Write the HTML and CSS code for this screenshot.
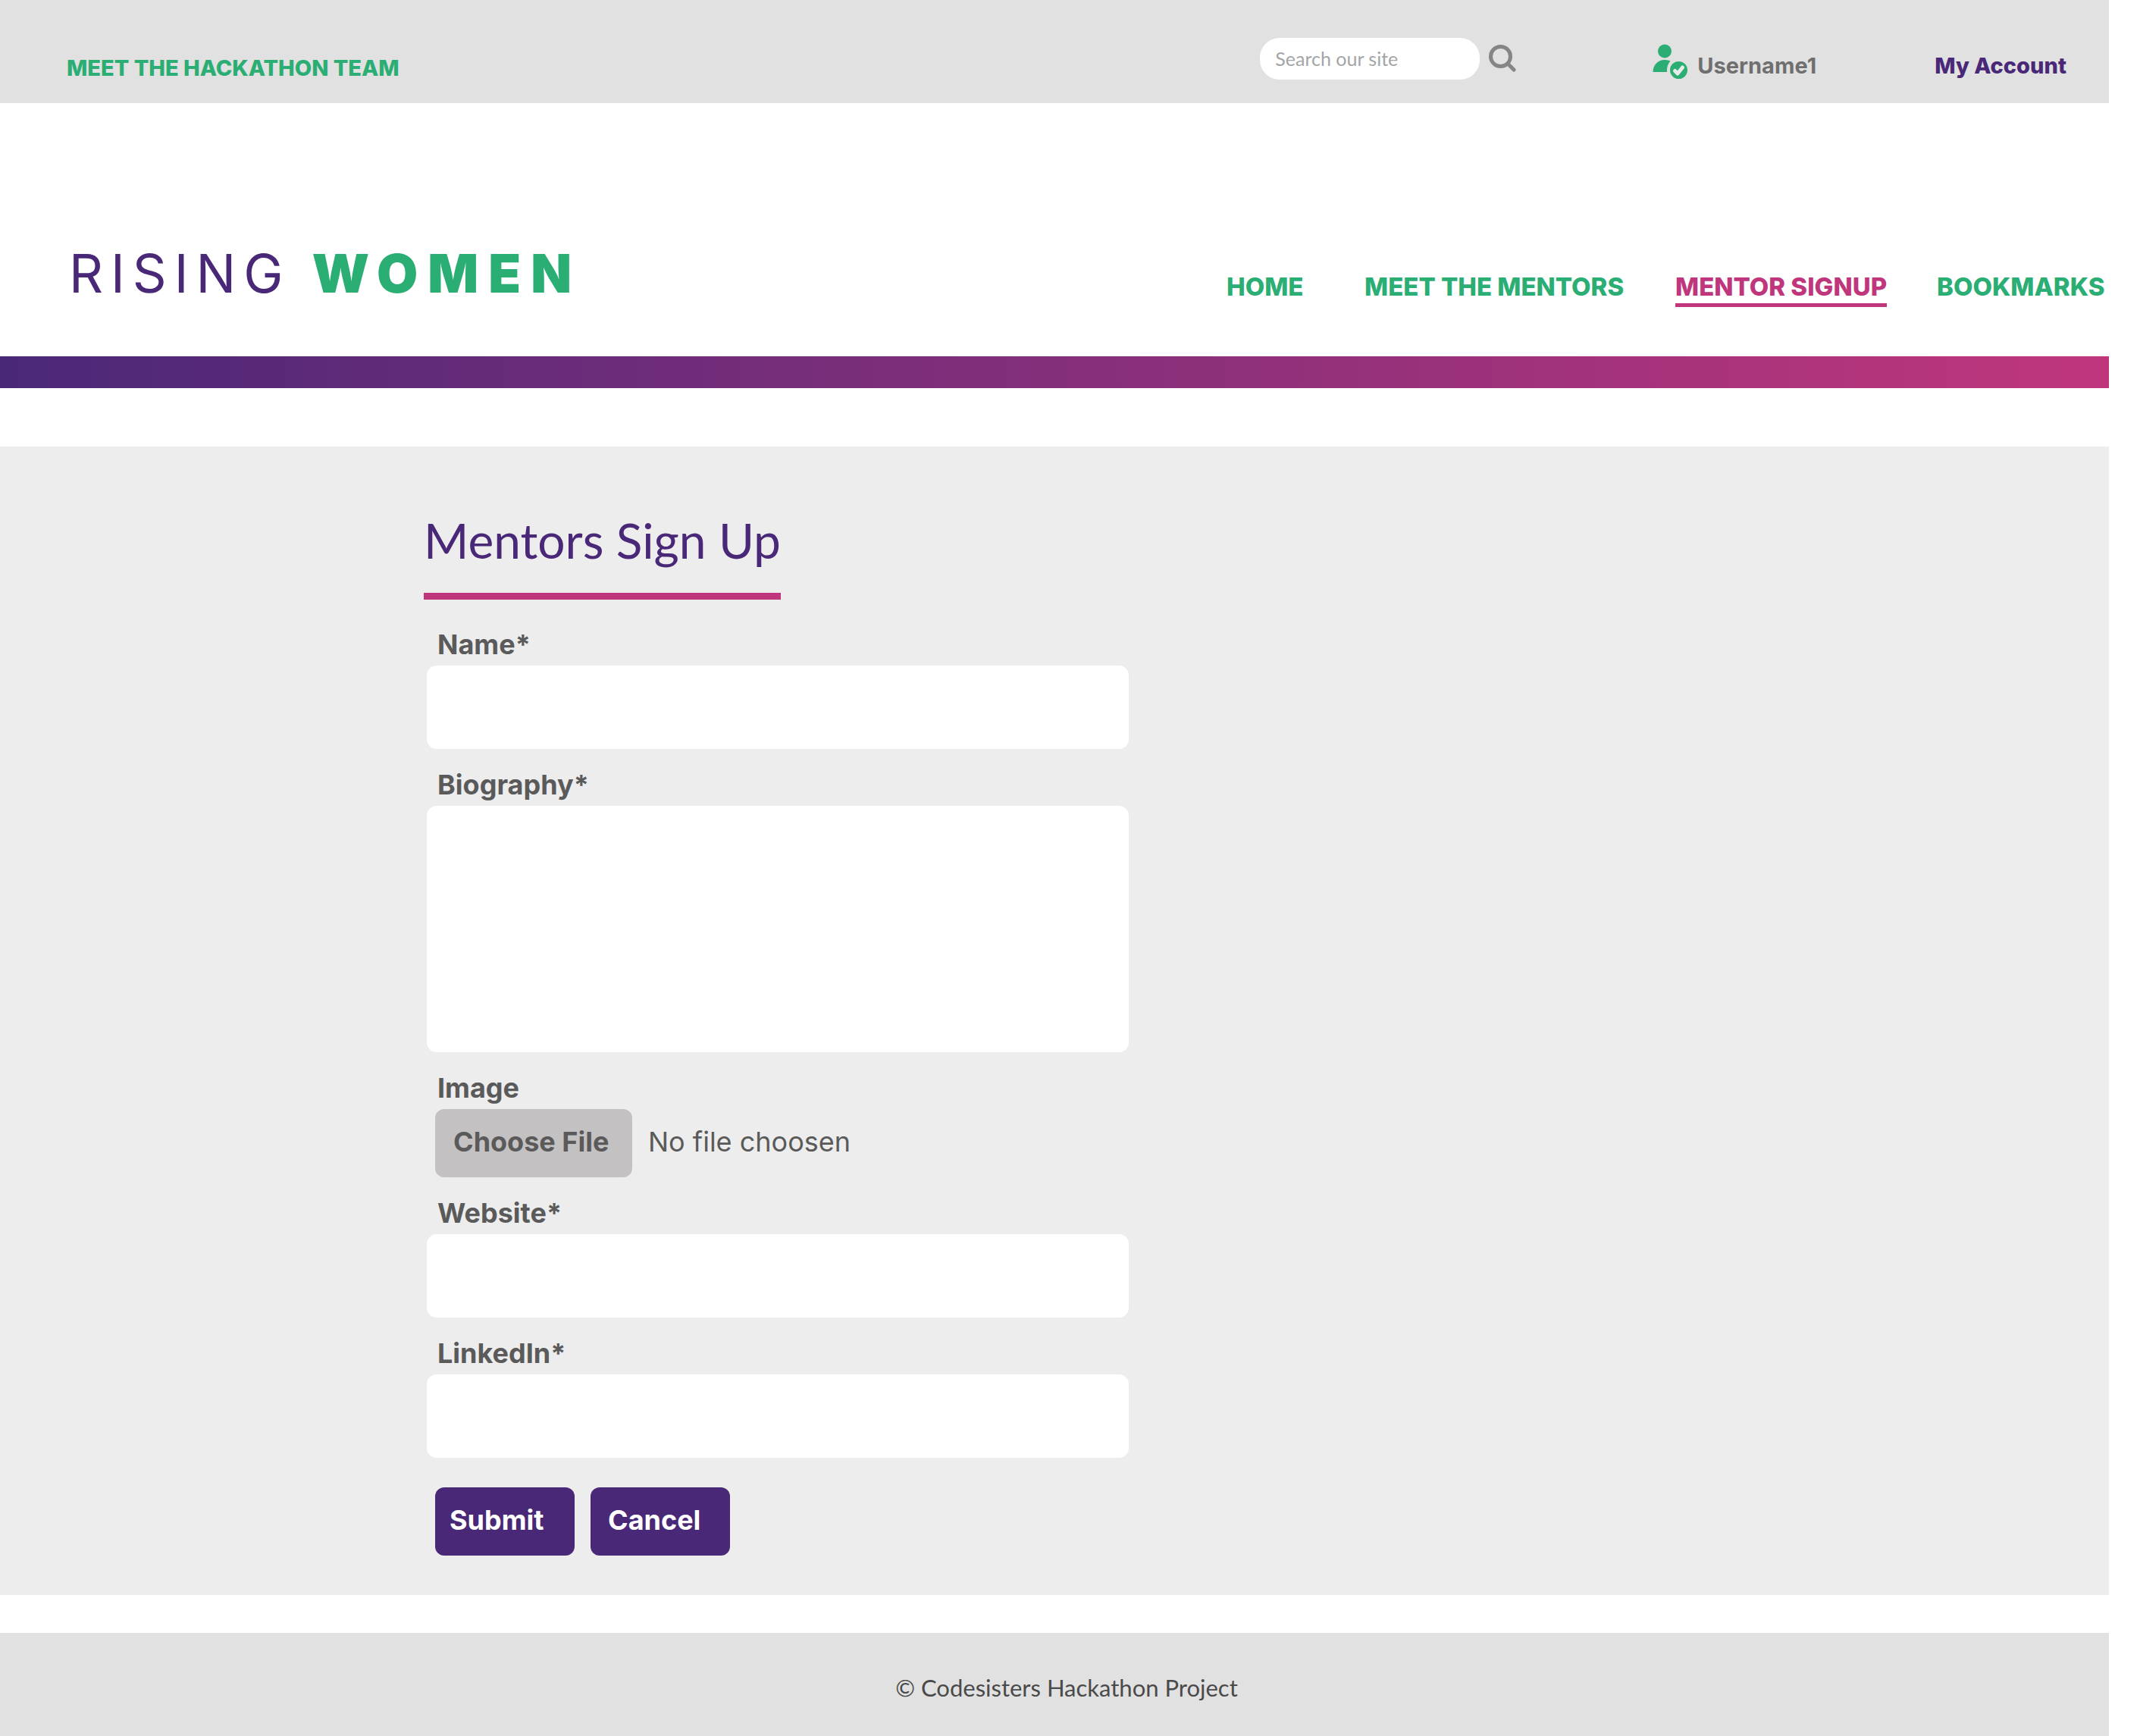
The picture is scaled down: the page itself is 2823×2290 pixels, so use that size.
FILE: index.html
```html
<!DOCTYPE html>
<html lang="en">
<head>
  <meta charset="utf-8">
  <meta name="viewport" content="width=device-width, initial-scale=1">
  <title>Mentors Sign Up | Rising Women</title>
  <link rel="stylesheet" href="styles.css">
</head>
<body>
  <div class="page">
    <div class="topbar">
      <a class="topbar-team" href="#team">MEET THE HACKATHON TEAM</a>
      <div class="topbar-tools">
        <form class="search" role="search">
          <input class="search-input" type="search" placeholder="Search our site" aria-label="Search our site">
          <button class="search-button" type="submit" aria-label="Search">
            <svg width="36" height="36" viewBox="0 0 36 36" fill="none" stroke="#858585" stroke-width="5" stroke-linecap="round" aria-hidden="true">
              <circle cx="15.5" cy="15.5" r="13"/>
              <path d="M25 25l8 8"/>
            </svg>
          </button>
        </form>
        <a class="user" href="#profile">
          <svg class="user-icon" width="46" height="46" viewBox="0 0 46 46" fill="#2bae74" aria-hidden="true">
            <circle cx="16" cy="9.5" r="9"/>
            <path d="M0.5 37C0.5 28 7 21 15.5 21C18.500 21 21 21.500 23.500 22.500C20 26.500 18.500 31 19 37Z"/>
            <circle cx="34.5" cy="34.5" r="11.5"/>
            <path d="M29.500 35.500l3.500 3.500l6.500-8" fill="none" stroke="#e8ebe9" stroke-width="5" stroke-linecap="round" stroke-linejoin="round"/>
          </svg>
          <span>Username1</span>
        </a>
        <a class="account" href="#account">My Account</a>
      </div>
    </div>

    <header class="header">
      <a class="logo" href="#home"><span class="logo-rising">RISING</span><span class="logo-women">WOMEN</span></a>
      <nav class="nav" aria-label="Main">
        <a class="nav-link" href="#home">HOME</a>
        <a class="nav-link" href="#mentors">MEET THE MENTORS</a>
        <a class="nav-link nav-link-current" href="#signup" aria-current="page">MENTOR SIGNUP</a>
        <a class="nav-link" href="#bookmarks">BOOKMARKS</a>
      </nav>
    </header>
    <div class="stripe"></div>

    <main class="main">
      <h1 class="title">Mentors Sign Up</h1>
      <form class="form">
        <div class="field">
          <label class="label" for="name">Name*</label>
          <input class="input" id="name" type="text" required>
        </div>
        <div class="field">
          <label class="label" for="biography">Biography*</label>
          <textarea class="input input-tall" id="biography" required></textarea>
        </div>
        <div class="field">
          <label class="label" for="image">Image</label>
          <div class="file">
            <input id="image" type="file" accept="image/*" hidden>
            <button class="button button-file" type="button" onclick="document.getElementById('image').click()">Choose File</button>
            <span class="file-status">No file choosen</span>
          </div>
        </div>
        <div class="field">
          <label class="label" for="website">Website*</label>
          <input class="input" id="website" type="url" required>
        </div>
        <div class="field">
          <label class="label" for="linkedin">LinkedIn*</label>
          <input class="input" id="linkedin" type="url" required>
        </div>
        <div class="actions">
          <button class="button button-submit" type="submit">Submit</button>
          <button class="button button-cancel" type="reset">Cancel</button>
        </div>
      </form>
    </main>

    <footer class="footer">© Codesisters Hackathon Project</footer>
  </div>
</body>
</html>
```
FILE: styles.css
```css
:root {
  --purple: #4a2878;
  --pink: #bf367c;
  --green: #2bae74;
  --bar: #e1e1e1;
  --panel: #ededed;
  --text: #5a5a5a;
}

* {
  box-sizing: border-box;
}

body {
  margin: 0;
  background: #fff;
  color: var(--text);
  font-family: Inter, "Liberation Sans", sans-serif;
}

a {
  color: inherit;
  text-decoration: none;
}

button,
input,
textarea {
  margin: 0;
  border: 0;
  font: inherit;
}

.page {
  margin-right: 41px;
}

/* Top bar */

.topbar {
  display: flex;
  flex-wrap: wrap;
  justify-content: space-between;
  align-items: center;
  min-height: 136px;
  padding: 38px 56px 0 88px;
  background: var(--bar);
  font-size: 29px;
  line-height: 34px;
  font-weight: 800;
}

.topbar-team {
  margin-top: 6px;
  color: var(--green);
}

.topbar-tools {
  display: flex;
  align-items: center;
}

.search {
  display: flex;
  align-items: center;
  gap: 12px;
  margin: 0 180px 20px 0;
}

.search-input {
  width: 290px;
  height: 55px;
  padding: 0 20px;
  border-radius: 26px;
  background: #fff;
  color: var(--text);
  font-family: Lato, "Liberation Sans", sans-serif;
  font-size: 25px;
  font-weight: 400;
}

.search-input::placeholder {
  color: #a3a5a7;
  opacity: 1;
}

.search-button {
  display: flex;
  padding: 0;
  background: none;
}

.user {
  display: flex;
  align-items: center;
  gap: 13px;
  margin-right: 156px;
  color: #6f6f6f;
  font-weight: 700;
}

.user-icon {
  margin-bottom: 12px;
}

.account {
  color: var(--purple);
}

/* Header */

.header {
  display: flex;
  flex-wrap: wrap;
  justify-content: space-between;
  align-items: flex-end;
  padding: 188px 3px 65px 91px;
}

.logo {
  display: flex;
  gap: 28px;
  margin-bottom: 9px;
  font-size: 70px;
  line-height: 70px;
}

.logo-rising {
  color: var(--purple);
  font-weight: 400;
  letter-spacing: 10px;
}

.logo-women {
  color: var(--green);
  font-weight: 900;
  letter-spacing: 13px;
}

.nav {
  display: grid;
  grid-template-columns: 182px 410px 345px 224px;
  justify-items: start;
  min-height: 81px;
  align-items: end;
}

.nav-link {
  padding-bottom: 2px;
  border-bottom: 5px solid transparent;
  color: var(--green);
  font-size: 33px;
  line-height: 40px;
  font-weight: 800;
}

.nav-link-current {
  border-color: var(--pink);
  color: var(--pink);
}

.stripe {
  height: 42px;
  background: linear-gradient(to right, var(--purple), var(--pink));
}

/* Sign-up form */

.main {
  margin: 77px 0 50px;
  padding: 90px 20px 52px 559px;
  background: var(--panel);
}

.title {
  width: fit-content;
  margin: 0 0 37px;
  padding-bottom: 35px;
  border-bottom: 9px solid var(--pink);
  color: var(--purple);
  font-family: Lato, "Liberation Sans", sans-serif;
  font-size: 64px;
  line-height: 68px;
  font-weight: 400;
}

.form {
  display: flex;
  flex-direction: column;
  gap: 25px;
  max-width: 930px;
  padding-left: 4px;
  font-size: 36px;
  line-height: 44px;
}

.field {
  display: flex;
  flex-direction: column;
  gap: 6px;
}

.label {
  padding-left: 14px;
  font-weight: 700;
}

.input {
  display: block;
  width: 100%;
  height: 110px;
  padding: 0 24px;
  border-radius: 13px;
  background: #fff;
  color: var(--text);
}

.input-tall {
  height: 325px;
  padding: 24px;
  resize: none;
}

.file {
  display: flex;
  align-items: center;
  gap: 21px;
  padding-left: 11px;
}

.file-status {
  padding-bottom: 4px;
}

.button {
  height: 90px;
  padding: 0 19px 4px;
  border-radius: 12px;
  background: var(--purple);
  color: #fff;
  font-weight: 700;
  text-align: left;
}

.button-file {
  width: 260px;
  padding-left: 24px;
  background: #c4c1c2;
  color: var(--text);
}

.actions {
  display: flex;
  gap: 21px;
  margin-top: 14px;
  padding-left: 11px;
}

.button-submit,
.button-cancel {
  width: 184px;
}

.button-cancel {
  padding-left: 23px;
}

/* Footer */

.footer {
  padding: 52px 0 44px 32px;
  background: var(--bar);
  color: #4a4a4a;
  font-family: Lato, "Liberation Sans", sans-serif;
  font-size: 31px;
  line-height: 40px;
  text-align: center;
}
```
